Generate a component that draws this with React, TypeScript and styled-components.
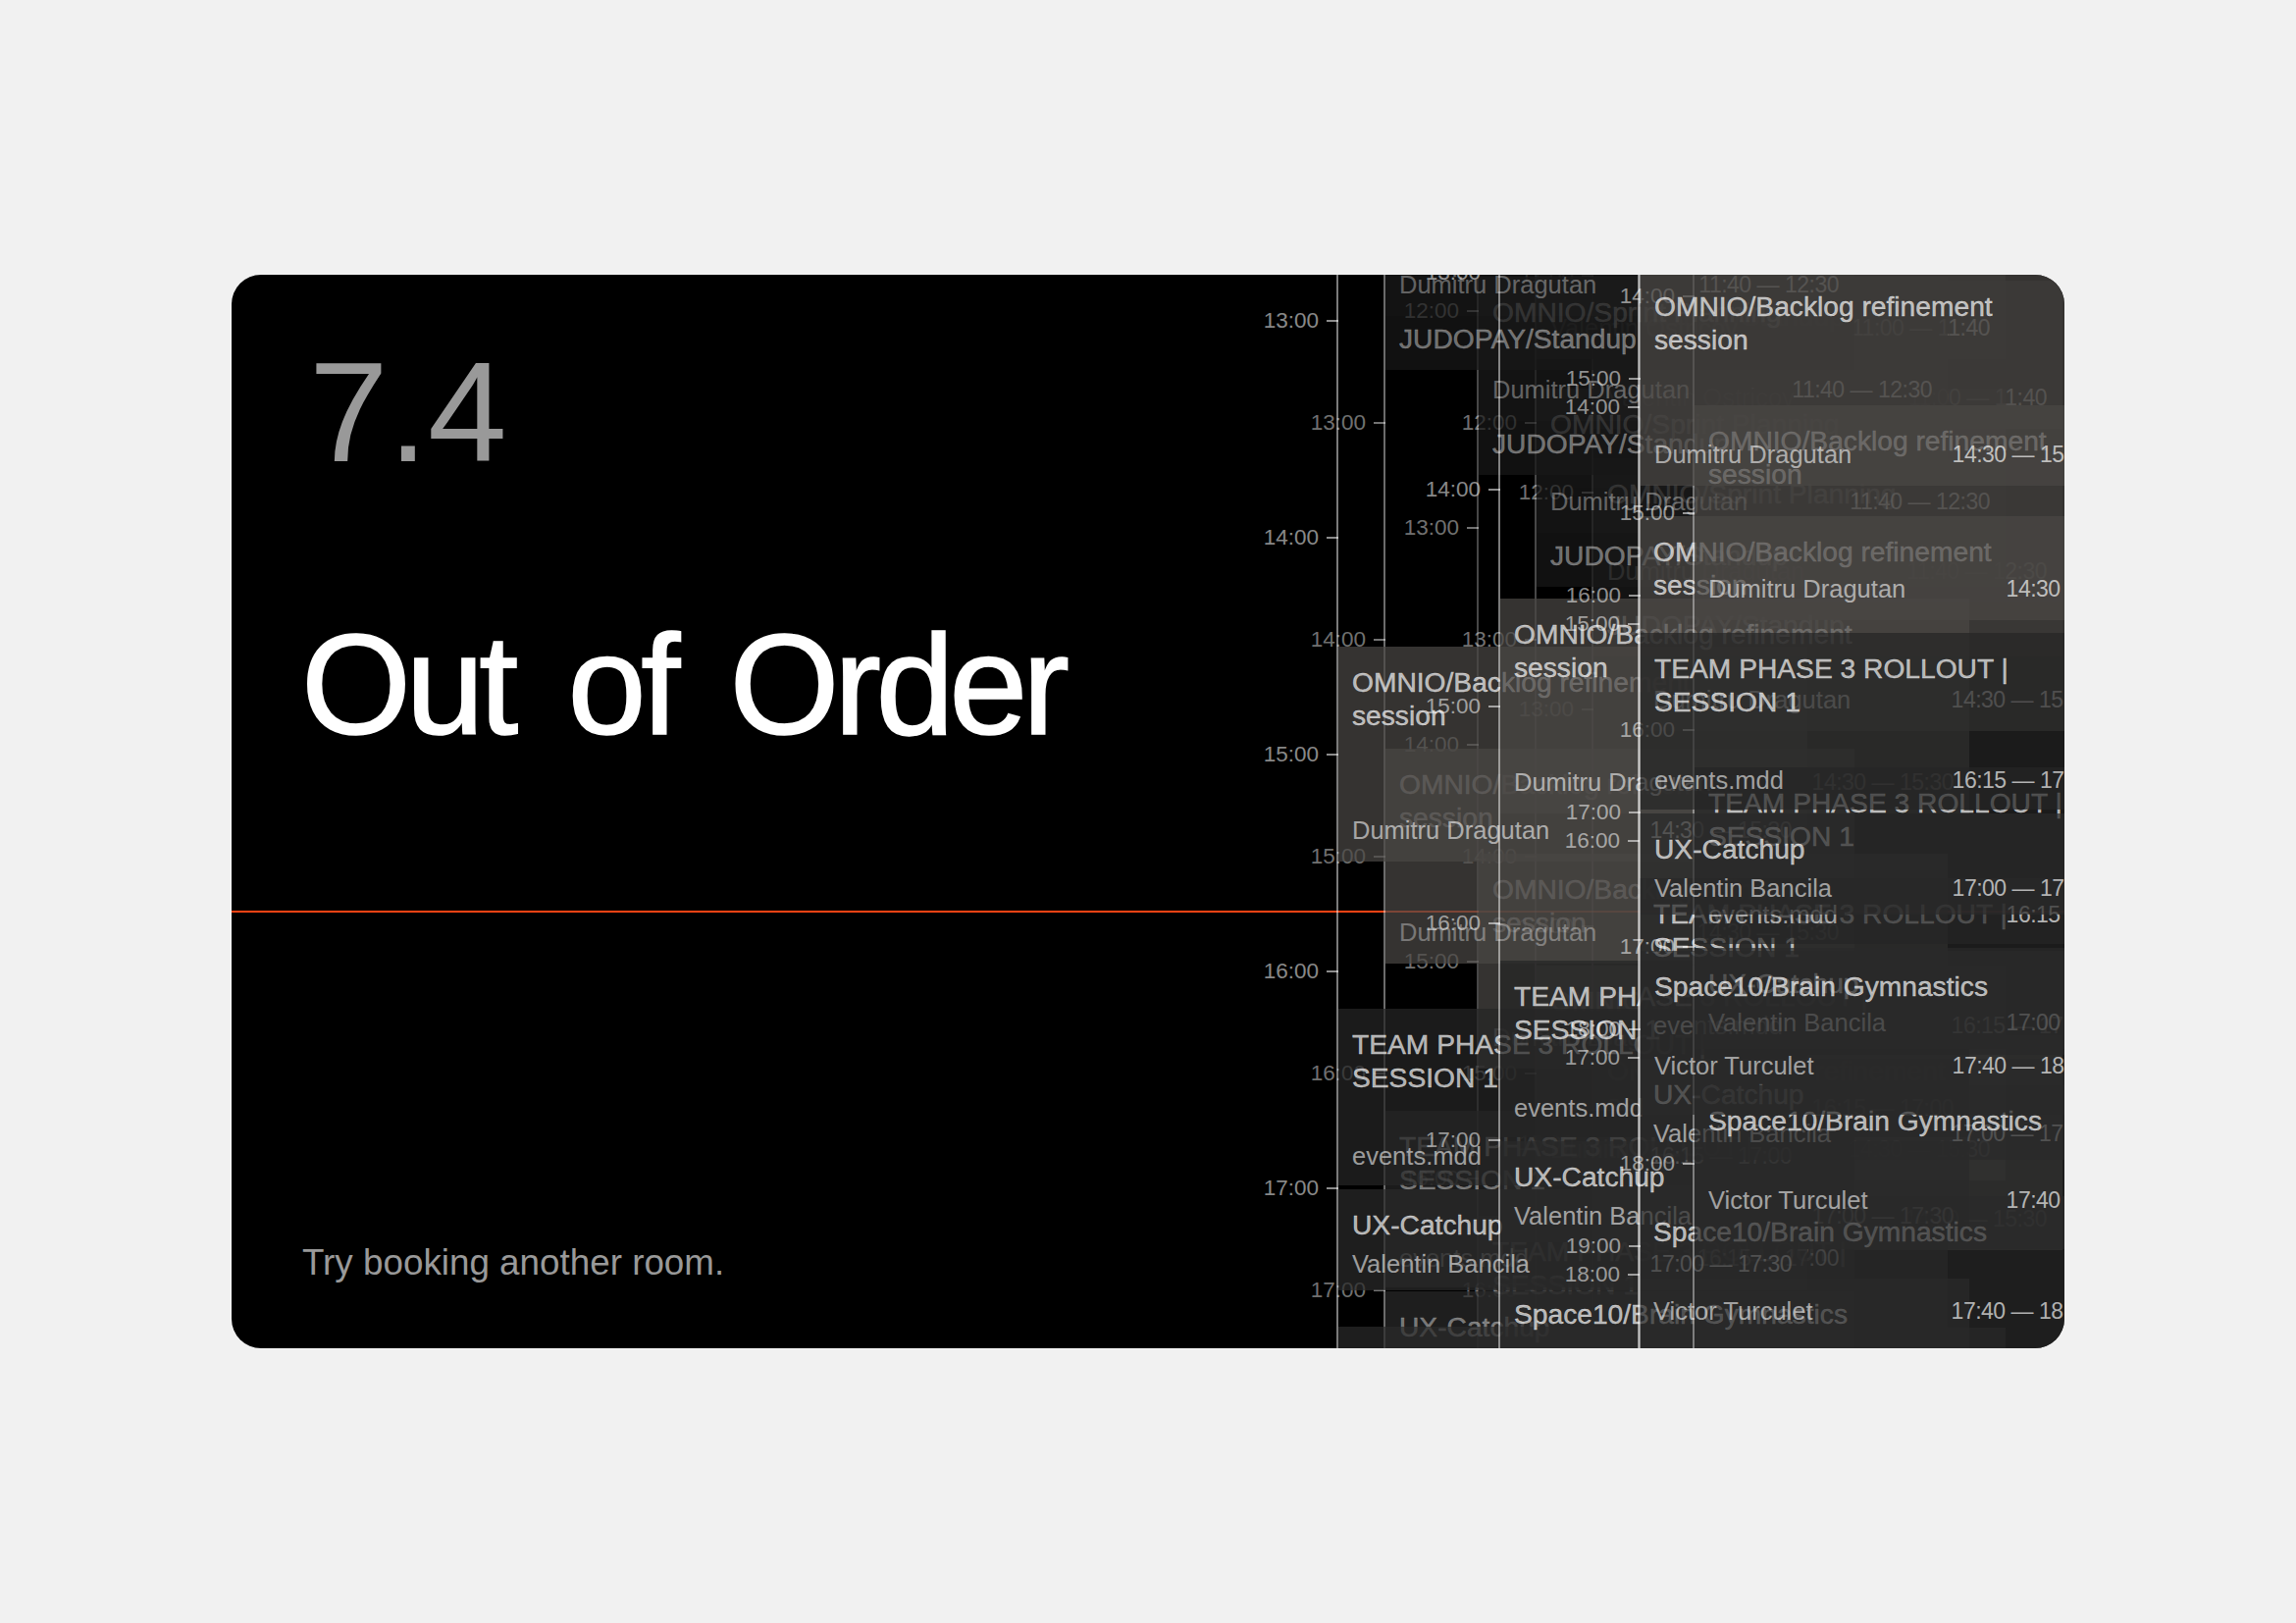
import styled, { createGlobalStyle } from 'styled-components';

const HOUR = 221;
const COL_WIDTH = 480;

// x of the rail and y of the 14:00 tick, card coordinates, painted bottom to top
const columns = [
  { x: 1386, y0: 664, faded: true, rail: 0.28 },
  { x: 1328, y0: 593, faded: true, rail: 0.28 },
  { x: 1269, y0: 479, faded: true, rail: 0.28 },
  { x: 1174, y0: 372, faded: true, rail: 0.42 },
  { x: 1126, y0: 268, rail: 0.48 },
  { x: 1291, y0: 219, rail: 0.48 },
  { x: 1433, y0: 135, rail: 0.48 },
  { x: 1489, y0: 22, rail: 0.4 },
  { x: 1434, y0: -115, rail: 0.48 },
];

const events = [
  { id: 'standup', top: -658, height: 151, fill: '30, 30, 30', title: 'JUDOPAY/Standup', person: 'Valentin Ostricov', time: '11:00 — 11:40', footGap: 17 },
  { id: 'sprint', top: -477, height: 147, fill: '26, 26, 26', title: 'OMNIO/Sprint Planning', person: 'Dumitru Dragutan', time: '11:40 — 12:30', footGap: 17 },
  { id: 'standup2', top: -330, height: 55, fill: '24, 24, 24', title: 'JUDOPAY/Standup', compact: true, footGap: 0 },
  { id: 'backlog', top: 111, height: 219, fill: '74, 71, 68', title: 'OMNIO/Backlog refinement session', person: 'Dumitru Dragutan', time: '14:30 — 15:30', footGap: 17 },
  { id: 'team', top: 480, height: 180, fill: '38, 38, 38', title: 'TEAM PHASE 3 ROLLOUT | SESSION 1', person: 'events.mdd', time: '16:15 — 17:00', footGap: 15 },
  { id: 'ux', top: 664, height: 103, fill: '42, 42, 42', title: 'UX-Catchup', person: 'Valentin Bancila', time: '17:00 — 17:30', footGap: 12 },
  { id: 'space', top: 804, height: 167, fill: '42, 42, 42', title: 'Space10/Brain Gymnastics', person: 'Victor Turculet', time: '17:40 — 18:30', footGap: 35 },
];

const hours = [10, 11, 12, 13, 14, 15, 16, 17, 18, 19, 20, 21];

const GlobalStyle = createGlobalStyle`
  html, body {
    margin: 0;
    padding: 0;
    background: #f1f1f1;
  }
`;

const Page = styled.div`
  display: flex;
  align-items: center;
  justify-content: center;
  height: 1654px;
  font-family: 'Liberation Sans', Arial, sans-serif;
`;

const Card = styled.section`
  position: relative;
  display: flex;
  width: 1868px;
  height: 1094px;
  border-radius: 30px;
  background: #000;
  overflow: hidden;
`;

const Intro = styled.div`
  display: flex;
  flex-direction: column;
  box-sizing: border-box;
  width: 1100px;
  height: 100%;
  padding: 68px 0 69px 72px;
`;

const Score = styled.div`
  margin-left: 7px;
  font-size: 145px;
  line-height: 145px;
  color: #999;
`;

const Headline = styled.h1`
  margin: 134px 0 0 -1px;
  font-size: 144px;
  line-height: 144px;
  font-weight: 400;
  letter-spacing: -5.4px;
  word-spacing: 21px;
  color: #fff;
  -webkit-text-stroke: 1.6px #fff;
`;

const Hint = styled.p`
  margin: auto 0 0;
  font-size: 36.8px;
  line-height: 37px;
  color: #999;
`;

const NowLine = styled.div`
  position: absolute;
  left: 0;
  right: 0;
  top: 648px;
  height: 1.5px;
  background: #ff4314;
`;

const ScheduleColumn = styled.div<{ $x: number; $rail: number }>`
  position: absolute;
  top: 0;
  bottom: 0;
  left: ${(p) => p.$x}px;
  width: ${COL_WIDTH}px;
  border-left: 2px solid rgba(255, 255, 255, ${(p) => p.$rail});
  box-sizing: border-box;
`;

const HourMark = styled.div<{ $y: number; $faded?: boolean }>`
  position: absolute;
  right: 100%;
  top: ${(p) => p.$y - 15}px;
  display: flex;
  align-items: center;
  gap: 8px;
  height: 30px;
  font-size: 22.5px;
  color: rgba(255, 255, 255, ${(p) => (p.$faded ? 0.45 : 0.55)});
  white-space: nowrap;

  &::after {
    content: '';
    width: 12px;
    height: 1.5px;
    background: currentColor;
  }
`;

const EventBlock = styled.article<{ $y: number; $height: number; $fill: string; $compact?: boolean; $footGap: number }>`
  position: absolute;
  left: 0;
  right: 0;
  top: ${(p) => p.$y}px;
  height: ${(p) => p.$height}px;
  box-sizing: border-box;
  display: flex;
  flex-direction: column;
  justify-content: space-between;
  padding: ${(p) => (p.$compact ? '6px' : '19px')} 16px ${(p) => p.$footGap}px 14px;
  background: rgba(${(p) => p.$fill}, 0.72);
`;

const EventTitle = styled.div<{ $faded?: boolean }>`
  max-width: 405px;
  font-size: 28.2px;
  line-height: 34px;
  color: rgba(255, 255, 255, 0.68);
  -webkit-text-stroke: 0.4px rgba(255, 255, 255, 0.68);
  opacity: ${(p) => (p.$faded ? 0.6 : 1)};
`;

const EventFooter = styled.div<{ $faded?: boolean }>`
  display: flex;
  justify-content: space-between;
  font-size: 25.5px;
  line-height: 30px;
  color: rgba(255, 255, 255, 0.58);
  white-space: nowrap;
  opacity: ${(p) => (p.$faded ? 0.6 : 1)};
`;

const EventTime = styled.span`
  font-size: 23px;
  letter-spacing: -0.5px;
  color: rgba(255, 255, 255, 0.66);
`;

export default function App() {
  return (
    <>
      <GlobalStyle />
      <Page>
        <Card>
          <NowLine />
          <Intro>
            <Score>7.4</Score>
            <Headline>Out of Order</Headline>
            <Hint>Try booking another room.</Hint>
          </Intro>
          {columns.map((col) => (
            <ScheduleColumn key={col.x + '-' + col.y0} $x={col.x} $rail={col.rail}>
              {hours.map((h) => (
                <HourMark key={h} $y={col.y0 + (h - 14) * HOUR} $faded={col.faded}>
                  {h}:00
                </HourMark>
              ))}
              {events.map((ev) => (
                <EventBlock
                  key={ev.id}
                  $y={col.y0 + ev.top}
                  $height={ev.height}
                  $fill={ev.fill}
                  $compact={ev.compact}
                  $footGap={ev.footGap}
                >
                  <EventTitle $faded={col.faded}>{ev.title}</EventTitle>
                  {ev.person && (
                    <EventFooter $faded={col.faded}>
                      <span>{ev.person}</span>
                      <EventTime>{ev.time}</EventTime>
                    </EventFooter>
                  )}
                </EventBlock>
              ))}
            </ScheduleColumn>
          ))}
        </Card>
      </Page>
    </>
  );
}
